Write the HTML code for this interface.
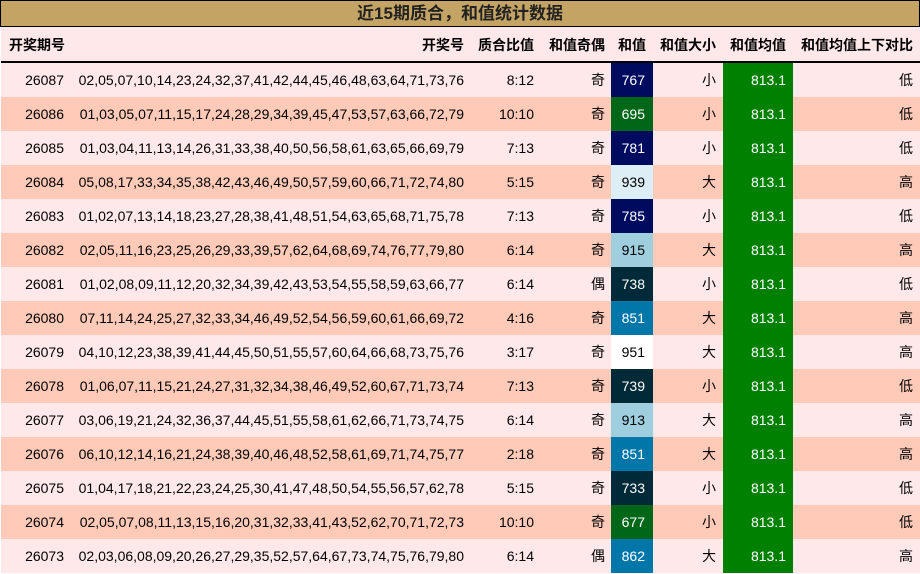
<!DOCTYPE html>
<html><head><meta charset="utf-8"><style>
*{margin:0;padding:0;box-sizing:border-box}
body{width:920px;height:574px;background:#fff;font-family:"Liberation Sans","Noto Sans CJK SC",sans-serif;font-size:14px;color:#000;overflow:hidden}
.title{position:absolute;left:0;top:0;width:920px;height:27px;background:#c4a464;border:1px solid #000;text-align:center;font-weight:bold;font-size:17px;line-height:25px;color:#222}
.hdr{position:absolute;left:1px;top:27px;width:919px;height:36px;background:#ffe8ea;border-bottom:2px solid #000;font-weight:bold}
.row{position:absolute;left:1px;width:919px;height:34px}
.c{position:absolute;top:0;height:100%;text-align:right;line-height:34px;white-space:nowrap}
.hdr .c{line-height:36px}
.l{background:#ffe8ea}.d{background:#ffcbb8}
.w{color:#fff}
</style></head><body>
<div class="title">近15期质合，和值统计数据</div>
<div class="hdr">
<div class="c" style="left:0;width:63px;text-align:left;padding-left:8px">开奖期号</div>
<div class="c" style="left:69px;width:394px">开奖号</div>
<div class="c" style="left:469px;width:64px">质合比值</div>
<div class="c" style="left:539px;width:65px">和值奇偶</div>
<div class="c" style="left:610px;width:35px">和值</div>
<div class="c" style="left:652px;width:63px">和值大小</div>
<div class="c" style="left:722px;width:63px">和值均值</div>
<div class="c" style="left:792px;width:120px">和值均值上下对比</div>
</div>
<div id="rows"></div>
<script>
var data=[
["26087","02,05,07,10,14,23,24,32,37,41,42,44,45,46,48,63,64,71,73,76","8:12","奇","767","#000b60",1,"小","低"],
["26086","01,03,05,07,11,15,17,24,28,29,34,39,45,47,53,57,63,66,72,79","10:10","奇","695","#006618",1,"小","低"],
["26085","01,03,04,11,13,14,26,31,33,38,40,50,56,58,61,63,65,66,69,79","7:13","奇","781","#000b60",1,"小","低"],
["26084","05,08,17,33,34,35,38,42,43,46,49,50,57,59,60,66,71,72,74,80","5:15","奇","939","#ddeef5",0,"大","高"],
["26083","01,02,07,13,14,18,23,27,28,38,41,48,51,54,63,65,68,71,75,78","7:13","奇","785","#000b60",1,"小","低"],
["26082","02,05,11,16,23,25,26,29,33,39,57,62,64,68,69,74,76,77,79,80","6:14","奇","915","#9fcfdf",0,"大","高"],
["26081","01,02,08,09,11,12,20,32,34,39,42,43,53,54,55,58,59,63,66,77","6:14","偶","738","#002a38",1,"小","低"],
["26080","07,11,14,24,25,27,32,33,34,46,49,52,54,56,59,60,61,66,69,72","4:16","奇","851","#0077a8",1,"大","高"],
["26079","04,10,12,23,38,39,41,44,45,50,51,55,57,60,64,66,68,73,75,76","3:17","奇","951","#ffffff",0,"大","高"],
["26078","01,06,07,11,15,21,24,27,31,32,34,38,46,49,52,60,67,71,73,74","7:13","奇","739","#002a38",1,"小","低"],
["26077","03,06,19,21,24,32,36,37,44,45,51,55,58,61,62,66,71,73,74,75","6:14","奇","913","#9fcfdf",0,"大","高"],
["26076","06,10,12,14,16,21,24,38,39,40,46,48,52,58,61,69,71,74,75,77","2:18","奇","851","#0077a8",1,"大","高"],
["26075","01,04,17,18,21,22,23,24,25,30,41,47,48,50,54,55,56,57,62,78","5:15","奇","733","#002a38",1,"小","低"],
["26074","02,05,07,08,11,13,15,16,20,31,32,33,41,43,52,62,70,71,72,73","10:10","奇","677","#006618",1,"小","低"],
["26073","02,03,06,08,09,20,26,27,29,35,52,57,64,67,73,74,75,76,79,80","6:14","偶","862","#0077a8",1,"大","高"]];
var h="";
data.forEach(function(r,i){
h+='<div class="row '+(i%2?'d':'l')+'" style="top:'+(63+i*34)+'px">'+
'<div class="c" style="left:0;width:63px">'+r[0]+'</div>'+
'<div class="c" style="left:69px;width:394px">'+r[1]+'</div>'+
'<div class="c" style="left:469px;width:64px">'+r[2]+'</div>'+
'<div class="c" style="left:539px;width:65px">'+r[3]+'</div>'+
'<div class="c'+(r[6]?' w':'')+'" style="left:610px;width:42px;padding-right:8px;background:'+r[5]+'">'+r[4]+'</div>'+
'<div class="c" style="left:652px;width:63px">'+r[7]+'</div>'+
'<div class="c w" style="left:722px;width:70px;padding-right:7px;background:#008000">813.1</div>'+
'<div class="c" style="left:792px;width:120px">'+r[8]+'</div></div>';
});
document.getElementById("rows").innerHTML=h;
</script>
</body></html>
